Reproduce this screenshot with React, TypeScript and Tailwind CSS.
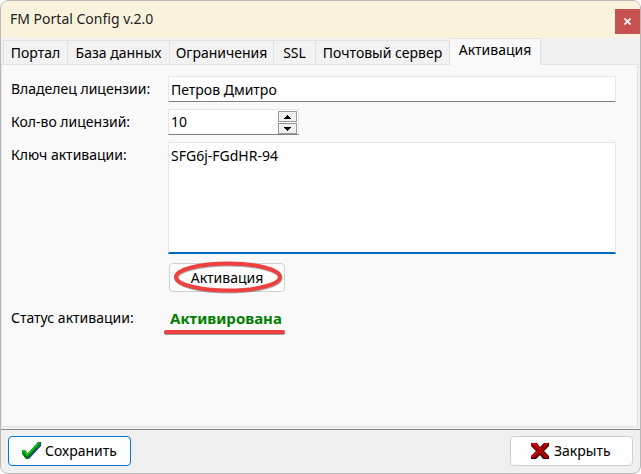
import { useState } from 'react';

const tabs = [
  { id: 'portal', title: 'Портал', width: 'w-16' },
  { id: 'db', title: 'База данных', width: 'w-[102px]' },
  { id: 'limits', title: 'Ограничения', width: 'w-[104px]' },
  { id: 'ssl', title: 'SSL', width: 'w-[42px]' },
  { id: 'mail', title: 'Почтовый сервер', width: 'w-[134px]' },
  { id: 'activation', title: 'Активация', width: 'w-[92px]' },
];

const fieldClass =
  'block bg-white border border-[#e6e6e6] border-b-[#808080] pl-0.5 outline-none';

// Green check mark with a blue shadow edge
function CheckIcon() {
  return (
    <svg className="w-5 h-5 shrink-0" viewBox="0 0 20 20" aria-hidden="true">
      <path d="M2 13V9l3 1 2 3L17 1l3 0v4L8 18H5z" fill="#1c35c0" />
      <path d="M1 13V9l3 0 2 4L17 1h2v3L7 18H5z" fill="#008a10" />
      <path d="M1 10l3 0 2 4L18 2" fill="none" stroke="#1fc51f" strokeWidth="1.5" />
      <path d="M3 15l3 2L16 7" fill="none" stroke="#06580c" strokeWidth="1" />
    </svg>
  );
}

// Dark red cross
function CrossIcon() {
  return (
    <svg className="w-5 h-5 shrink-0" viewBox="0 0 20 20" aria-hidden="true">
      <path
        d="M1 2h6l3 4 4-4h5v3l-5 5 5 5v3h-6l-3-4-4 4H1v-3l5-5-5-5z"
        fill="#210000"
      />
      <path d="M2 2h4l4 5 5-5h3v2l-5 6 5 5v2h-4l-4-5-5 5H1v-2l6-5-6-6z" fill="#a80000" />
      <path d="M1 4l1-1h4l4 5M14 3h4M2 16l6-6" fill="none" stroke="#ef1414" strokeWidth="1" />
    </svg>
  );
}

function SpinArrow({ up }: { up?: boolean }) {
  return (
    <svg className="w-[7px] h-1" viewBox="0 0 7 4" shapeRendering="crispEdges" aria-hidden="true">
      <path d={up ? 'M0 4V3h1V2h1V1h1V0h1v1h1v1h1v1h1v1z' : 'M0 0v1h1v1h1v1h1v1h1V3h1V2h1V1h1V0z'} />
    </svg>
  );
}

export default function App() {
  const [active, setActive] = useState('activation');
  const [count, setCount] = useState(10);

  return (
    <div className="min-h-screen bg-white">
      <div className="min-h-screen flex flex-col rounded-lg overflow-hidden border border-[#b9b9b9] bg-[#f0f0f0] font-['Noto_Sans',sans-serif] text-sm leading-5 text-black">
        <header className="flex justify-between h-[37px] bg-[#f9f3dd]">
          <h1 className="pl-[9px] pt-2 text-[#222]">FM Portal Config v.2.0</h1>
          <button
            type="button"
            aria-label="Закрыть окно"
            className="mt-2 w-[25px] h-[25px] flex items-center justify-center bg-[#c75050]"
          >
            <svg className="w-[7px] h-[7px]" viewBox="0 0 7 7" aria-hidden="true">
              <path d="M0.5 0.5l6 6M6.5 0.5l-6 6" stroke="#fff" strokeWidth="1.7" />
            </svg>
          </button>
        </header>

        <div role="tablist" className="flex items-end h-[26px] pl-0.5">
          {tabs.map((tab) => (
            <button
              key={tab.id}
              type="button"
              role="tab"
              aria-selected={tab.id === active}
              onClick={() => setActive(tab.id)}
              className={`${tab.width} shrink-0 whitespace-nowrap border-t border-l border-[#e2e2e2] last:border-r ${
                tab.id === active ? 'relative h-[27px] -mb-px pb-1 bg-[#f9f9f9]' : 'h-6 bg-[#f2f2f2]'
              }`}
            >
              {tab.title}
            </button>
          ))}
        </div>

        <main className="flex-1 mr-0.5 mb-0.5 pl-[9px] pr-[21px] pt-[11px] border border-[#e2e2e2] bg-[#f9f9f9]">
          <div className="grid grid-cols-[157px_1fr] gap-y-[7px]">
            <label htmlFor="owner" className="pt-[3px]">Владелец лицензии:</label>
            <input
              id="owner"
              defaultValue="Петров Дмитро"
              className={`${fieldClass} w-full h-[26px]`}
            />

            <label htmlFor="count" className="pt-[3px]">Кол-во лицензий:</label>
            <div className={`${fieldClass} flex w-[131px] h-[26px]`}>
              <input
                id="count"
                inputMode="numeric"
                value={count}
                onChange={(e) => setCount(Number(e.target.value) || 0)}
                className="flex-1 min-w-0 outline-none"
              />
              <div className="flex flex-col gap-px pt-px pr-px">
                <button
                  type="button"
                  aria-label="Больше"
                  onClick={() => setCount(count + 1)}
                  className="w-[19px] h-[11px] flex items-center justify-center border border-[#999] bg-[#f0f0f0]"
                >
                  <SpinArrow up />
                </button>
                <button
                  type="button"
                  aria-label="Меньше"
                  onClick={() => setCount(Math.max(0, count - 1))}
                  className="w-[19px] h-[11px] flex items-center justify-center border border-[#999] bg-[#f0f0f0]"
                >
                  <SpinArrow />
                </button>
              </div>
            </div>

            <label htmlFor="key" className="pt-[3px]">Ключ активации:</label>
            <textarea
              id="key"
              defaultValue="SFG6j-FGdHR-94"
              className="block w-full h-28 pl-0.5 pt-[3px] resize-none outline-none bg-white border border-b-2 border-[#e6e6e6] border-b-[#0067c0]"
            />
          </div>

          <div className="grid grid-cols-[157px_1fr] mt-[9px]">
            <div className="col-start-2 relative w-fit">
              <button
                type="button"
                className="block ml-px w-[116px] h-[29px] rounded-sm border border-[#d0d0d0] bg-[#fdfdfd]"
              >
                Активация
              </button>
              {/* Red highlight ring */}
              <svg
                className="absolute left-1 -top-1 w-[112px] h-9 pointer-events-none"
                viewBox="0 0 112 36"
                aria-hidden="true"
              >
                <ellipse cx="56.5" cy="19" rx="52" ry="13.5" fill="none" stroke="#777" strokeOpacity="0.6" strokeWidth="4" />
                <ellipse cx="56" cy="18" rx="52" ry="13.5" fill="none" stroke="#ef4040" strokeWidth="4" />
              </svg>
            </div>
          </div>

          <div className="grid grid-cols-[157px_1fr] mt-4">
            <span>Статус активации:</span>
            <div className="relative w-fit pl-0.5">
              <output className="text-[15px] leading-5 font-bold text-[#008000]">Активирована</output>
              <span className="absolute -left-1 top-[22px] w-[121px] h-1 rounded-full bg-[#ef4040] shadow-[0_1px_0_#999]" />
            </div>
          </div>
        </main>

        <footer className="flex justify-between h-11 px-[7px] pt-1.5 border-t border-[#85888f]">
          <button
            type="button"
            className="flex items-center gap-1 w-[123px] h-[30px] pl-3 rounded-sm border border-[#0078d4] bg-[#fdfdfd]"
          >
            <CheckIcon />
            Сохранить
          </button>
          <button
            type="button"
            className="flex items-center gap-1 w-[123px] h-[30px] pl-[19px] rounded-sm border border-[#d0d0d0] bg-[#fdfdfd]"
          >
            <CrossIcon />
            Закрыть
          </button>
        </footer>
      </div>
    </div>
  );
}
